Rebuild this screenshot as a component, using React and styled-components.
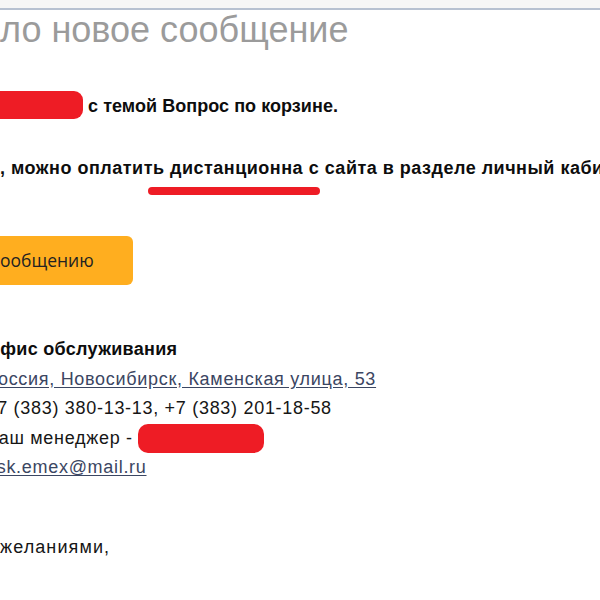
import React from 'react';
import styled, { createGlobalStyle } from 'styled-components';

const GlobalStyle = createGlobalStyle`
  html, body {
    margin: 0;
    padding: 0;
    background: #ffffff;
    overflow: hidden;
  }
  body {
    font-family: "Liberation Sans", Arial, sans-serif;
  }
`;

const Page = styled.div`
  width: 600px;
  height: 600px;
  overflow: hidden;
  background: #ffffff;
`;

const TopStrip = styled.div`
  height: 8px;
  background: #f6f6f6;
  border-bottom: 2px solid #b7c1d1;
`;

const Body = styled.div`
  display: flex;
  flex-direction: column;
  align-items: flex-start;
`;

const Title = styled.h1`
  margin: 0 0 41px;
  font-size: 36px;
  font-weight: normal;
  line-height: 40px;
  color: #9b9b9b;
  white-space: nowrap;
`;

const Para = styled.p`
  position: relative;
  margin: 0 0 ${(p) => p.$gap || 32}px;
  font-size: 18px;
  font-weight: bold;
  line-height: 30px;
  letter-spacing: ${(p) => p.$ls || 0}px;
  color: #0d0d0d;
  white-space: nowrap;
`;

const Redact = styled.span`
  display: inline-block;
  width: ${(p) => p.$w}px;
  height: ${(p) => p.$h}px;
  background: #ee1c25;
  border-radius: ${(p) => (p.$round ? '10px' : '0 9px 9px 0')};
  vertical-align: top;
`;

const Scribble = styled.span`
  position: absolute;
  left: 148px;
  top: 34px;
  width: 172px;
  height: 8px;
  border-radius: 4px;
  background: #ee1c25;
`;

const Button = styled.a`
  display: inline-flex;
  align-items: center;
  box-sizing: border-box;
  width: 133px;
  height: 49px;
  padding-bottom: 2px;
  background: #ffae1f;
  border-radius: 0 6px 6px 0;
  font-family: "Open Sans", "Liberation Sans", sans-serif;
  font-size: 17.5px;
  color: #222222;
  text-decoration: none;
  white-space: nowrap;
`;

const Footer = styled.div`
  margin: 50px 0 0 -14px;
  font-size: 18px;
  line-height: 29.5px;
  letter-spacing: 0.7px;
  color: #161616;
  white-space: nowrap;
`;

const Line = styled.div`
  font-weight: ${(p) => (p.$bold ? 'bold' : 'normal')};
  letter-spacing: ${(p) => (p.$bold ? '0.3px' : 'inherit')};
  color: ${(p) => (p.$bold ? '#0d0d0d' : 'inherit')};
`;

const Link = styled.a`
  color: #3b4662;
  text-decoration: underline;
  text-underline-offset: 2px;
`;

const Farewell = styled.div`
  margin-top: 50px;
  font-size: 18px;
  line-height: 29.5px;
  letter-spacing: 1.1px;
  color: #161616;
  white-space: nowrap;
`;

export default function App() {
  return (
    <Page>
      <GlobalStyle />
      <TopStrip />
      <Body>
        <Title>ло новое сообщение</Title>
        <Para $ls={0.05}>
          <Redact $w={83} $h={28} /> с темой Вопрос по корзине.
        </Para>
        <Para $gap={53} $ls={0.5}>
          , можно оплатить дистанционна с сайта в разделе личный кабинет
          <Scribble />
        </Para>
        <Button href="#">ообщению</Button>
        <Footer>
          <Line $bold>Офис обслуживания</Line>
          <Line>
            <Link href="#">Россия, Новосибирск, Каменская улица, 53</Link>
          </Line>
          <Line>+7 (383) 380-13-13, +7 (383) 201-18-58</Line>
          <Line>
            Ваш менеджер - <Redact $w={126} $h={29} $round />
          </Line>
          <Line>
            <Link href="#">nsk.emex@mail.ru</Link>
          </Line>
        </Footer>
        <Farewell>желаниями,</Farewell>
      </Body>
    </Page>
  );
}
